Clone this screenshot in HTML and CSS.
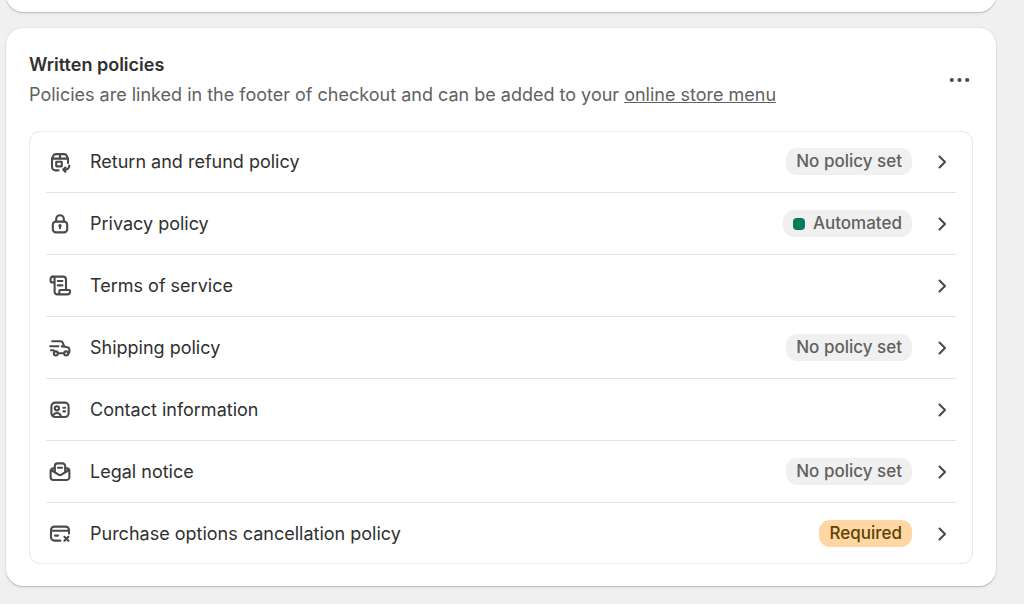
FILE: index.html
```html
<!DOCTYPE html>
<html lang="en">

<head>
    <meta charset="UTF-8">
    <meta name="viewport" content="width=device-width, initial-scale=1">
    <title>Policies</title>
    <link rel="stylesheet" href="styles.css">
</head>
<body>
<svg class="sprite" aria-hidden="true">
    <symbol id="chevron" viewBox="0 0 28 28">
        <path d="M11.5 8.5 L17 14 L11.5 19.5"/>
    </symbol>
</svg>
<main class="page">
    <section class="card card-previous"></section>

    <section class="card">
        <header class="card-header">
            <div class="card-intro">
                <h2>Written policies</h2>
                <p>Policies are linked in the footer of checkout and can be added to your <a href="#">online store menu</a></p>
            </div>
            <button class="more" type="button" aria-label="More actions">
                <svg class="dots" viewBox="0 0 28 28">
                    <circle cx="6.8" cy="14" r="2.1"/>
                    <circle cx="14.5" cy="14" r="2.1"/>
                    <circle cx="22.2" cy="14" r="2.1"/>
                </svg>
            </button>
        </header>

        <ul class="policies">
            <li>
                <a class="policy" href="#">
                    <svg class="icon" viewBox="0 0 28 28">
                        <path d="M12.5 22.4H9.5a3.5 3.5 0 0 1-3.5-3.5V10.5l1.5-3a2.5 2.5 0 0 1 2.2-1.4h8.6a2.5 2.5 0 0 1 2.2 1.4l1.5 3V15"/>
                        <path d="M6.2 10.6H21.8M14 6.2V10.4"/>
                        <rect x="10.2" y="13.8" width="5.6" height="4.6" rx=".4"/>
                        <path d="M23.2 17.5v.6a3.5 3.5 0 0 1-3.5 3.5H17.2M19.4 19.4L17.2 21.6L19.4 23.8"/>
                    </svg>
                    <span class="name">Return and refund policy</span>
                    <span class="badge">No policy set</span>
                    <svg class="icon"><use href="#chevron"/></svg>
                </a>
            </li>
            <li>
                <a class="policy" href="#">
                    <svg class="icon" viewBox="0 0 28 28">
                        <rect x="6.8" y="11.6" width="14.4" height="10.8" rx="3.2"/>
                        <path d="M10.2 11.4V9a3.8 3.8 0 0 1 7.6 0v2.4M14 16v2.2"/>
                        <circle class="solid" cx="14" cy="15.8" r="1.7"/>
                    </svg>
                    <span class="name">Privacy policy</span>
                    <span class="badge"><i class="pip"></i>Automated</span>
                    <svg class="icon"><use href="#chevron"/></svg>
                </a>
            </li>
            <li>
                <a class="policy" href="#">
                    <svg class="icon" viewBox="0 0 28 28">
                        <path d="M8.6 10.4H5.8a1.2 1.2 0 0 1-1.2-1.2V6.6a2 2 0 0 1 4 0V19.8a2.6 2.6 0 0 0 2.6 2.6H21.4a2.6 2.6 0 0 0 2.6-2.6v-.8a1 1 0 0 0-1-1H14.4a1 1 0 0 0-1 1v.8a2.4 2.4 0 0 1-2.4 2.6"/>
                        <path d="M6.6 4.6H17a3 3 0 0 1 3 3V17.6"/>
                        <path d="M11.8 9H16.4M11.8 13.4H16.4"/>
                    </svg>
                    <span class="name">Terms of service</span>
                    <svg class="icon"><use href="#chevron"/></svg>
                </a>
            </li>
            <li>
                <a class="policy" href="#">
                    <svg class="icon" viewBox="0 0 28 28">
                        <path d="M6.2 7.2H14.4a2.6 2.6 0 0 1 2.4 1.6L18.2 12.4L22 13.6a2 2 0 0 1 1.4 1.9V17.8a1.4 1.4 0 0 1-1.2 1.4"/>
                        <path d="M4.2 12.2H12.4M5 16.2H7a2.6 2.6 0 0 1 1.6 1.2M12 19.2H17.8M15.8 12.4H18"/>
                        <circle cx="9.8" cy="19.4" r="2"/>
                        <circle cx="20.2" cy="19.4" r="2"/>
                    </svg>
                    <span class="name">Shipping policy</span>
                    <span class="badge">No policy set</span>
                    <svg class="icon"><use href="#chevron"/></svg>
                </a>
            </li>
            <li>
                <a class="policy" href="#">
                    <svg class="icon" viewBox="0 0 28 28">
                        <rect x="5.4" y="6.6" width="17.2" height="14.4" rx="3.8"/>
                        <circle cx="10.9" cy="12.3" r="2.1"/>
                        <path d="M7 19.4a4.4 4.4 0 0 1 7.8 0M17.4 11.8H19M17.4 15.4H19"/>
                    </svg>
                    <span class="name">Contact information</span>
                    <svg class="icon"><use href="#chevron"/></svg>
                </a>
            </li>
            <li>
                <a class="policy" href="#">
                    <svg class="icon" viewBox="0 0 28 28">
                        <path d="M8.8 10.4H7.2a2.6 2.6 0 0 0-2.6 2.6V19a3 3 0 0 0 3 3H20.4a3 3 0 0 0 3-3V13a2.6 2.6 0 0 0-2.6-2.6H19.2"/>
                        <path d="M8.8 13.8V8a2.6 2.6 0 0 1 2.6-2.6H16.6a2.6 2.6 0 0 1 2.6 2.6V13.8"/>
                        <path d="M5 12L13 16.8a2 2 0 0 0 2 0L23 12M12 9.8H16"/>
                    </svg>
                    <span class="name">Legal notice</span>
                    <span class="badge">No policy set</span>
                    <svg class="icon"><use href="#chevron"/></svg>
                </a>
            </li>
            <li>
                <a class="policy" href="#">
                    <svg class="icon" viewBox="0 0 28 28">
                        <path d="M14.4 20.6H8.4a3.4 3.4 0 0 1-3.4-3.4V10a3.4 3.4 0 0 1 3.4-3.4H19.6a3.4 3.4 0 0 1 3.4 3.4V13.6"/>
                        <path d="M5 10.8H23M9 15.6H12"/>
                        <path d="M18.4 16.8L22.4 20.8M22.4 16.8L18.4 20.8"/>
                    </svg>
                    <span class="name">Purchase options cancellation policy</span>
                    <span class="badge badge-warning">Required</span>
                    <svg class="icon"><use href="#chevron"/></svg>
                </a>
            </li>
        </ul>
    </section>
</main>
</body>

</html>
```

FILE: styles.css
```css
* {
    box-sizing: border-box;
}
body {
    margin: 0;
    background-color: #f0f0f0;
    color: #303030;
    font-family: Inter, "Liberation Sans", sans-serif;
    font-size: 18px;
    line-height: 27px;
}
.sprite {
    display: none;
}
.page {
    display: flex;
    flex-direction: column;
    gap: 16px;
    padding: 0 28px 16px 6px;
}
.card {
    padding: 23px 23px 22px;
    background-color: #fff;
    border-radius: 17px;
    box-shadow: 0 1px 1px rgba(0, 0, 0, 0.16), 0 0 2px rgba(0, 0, 0, 0.14), 0 3px 3px rgba(0, 0, 0, 0.03);
}
/* only the bottom edge of this one shows */
.card-previous {
    height: 48px;
    margin-top: -36px;
}
.card-header {
    display: flex;
    align-items: center;
    justify-content: space-between;
    gap: 16px;
    margin-bottom: 23px;
}
.card-intro {
    display: flex;
    flex-direction: column;
    gap: 3px;
}
.card-intro h2 {
    margin: 0;
    font-size: 18px;
    font-weight: 600;
}
.card-intro p {
    margin: 0;
    color: #616161;
}
.card-intro a {
    color: inherit;
}
.more {
    display: flex;
    padding: 0;
    border: 0;
    background: none;
    cursor: pointer;
}
.dots {
    width: 28px;
    height: 28px;
    fill: #4a4a4a;
}
.policies {
    margin: 0;
    padding: 0 17px;
    list-style: none;
    border-radius: 11px;
    box-shadow: inset 0 0 0 1px #ebebeb;
}
.policies li + li {
    border-top: 1px solid #e3e3e3;
}
.policy {
    display: flex;
    align-items: center;
    gap: 16px;
    min-height: 61px;
    color: inherit;
    text-decoration: none;
}
.name {
    flex: 1;
}
.icon {
    flex: none;
    width: 28px;
    height: 28px;
    fill: none;
    stroke: #4a4a4a;
    stroke-width: 2.1;
    stroke-linecap: round;
    stroke-linejoin: round;
}
.solid {
    fill: #4a4a4a;
    stroke: none;
}
.badge {
    display: flex;
    align-items: center;
    gap: 8px;
    padding: 0 10px;
    border-radius: 11px;
    background-color: #f0f0f0;
    color: #616161;
    font-size: 17px;
    font-weight: 500;
}
.badge-warning {
    background-color: #ffd6a4;
    color: #5e4200;
}
.pip {
    width: 12px;
    height: 12px;
    border-radius: 4px;
    background-color: #047b5d;
}
```
